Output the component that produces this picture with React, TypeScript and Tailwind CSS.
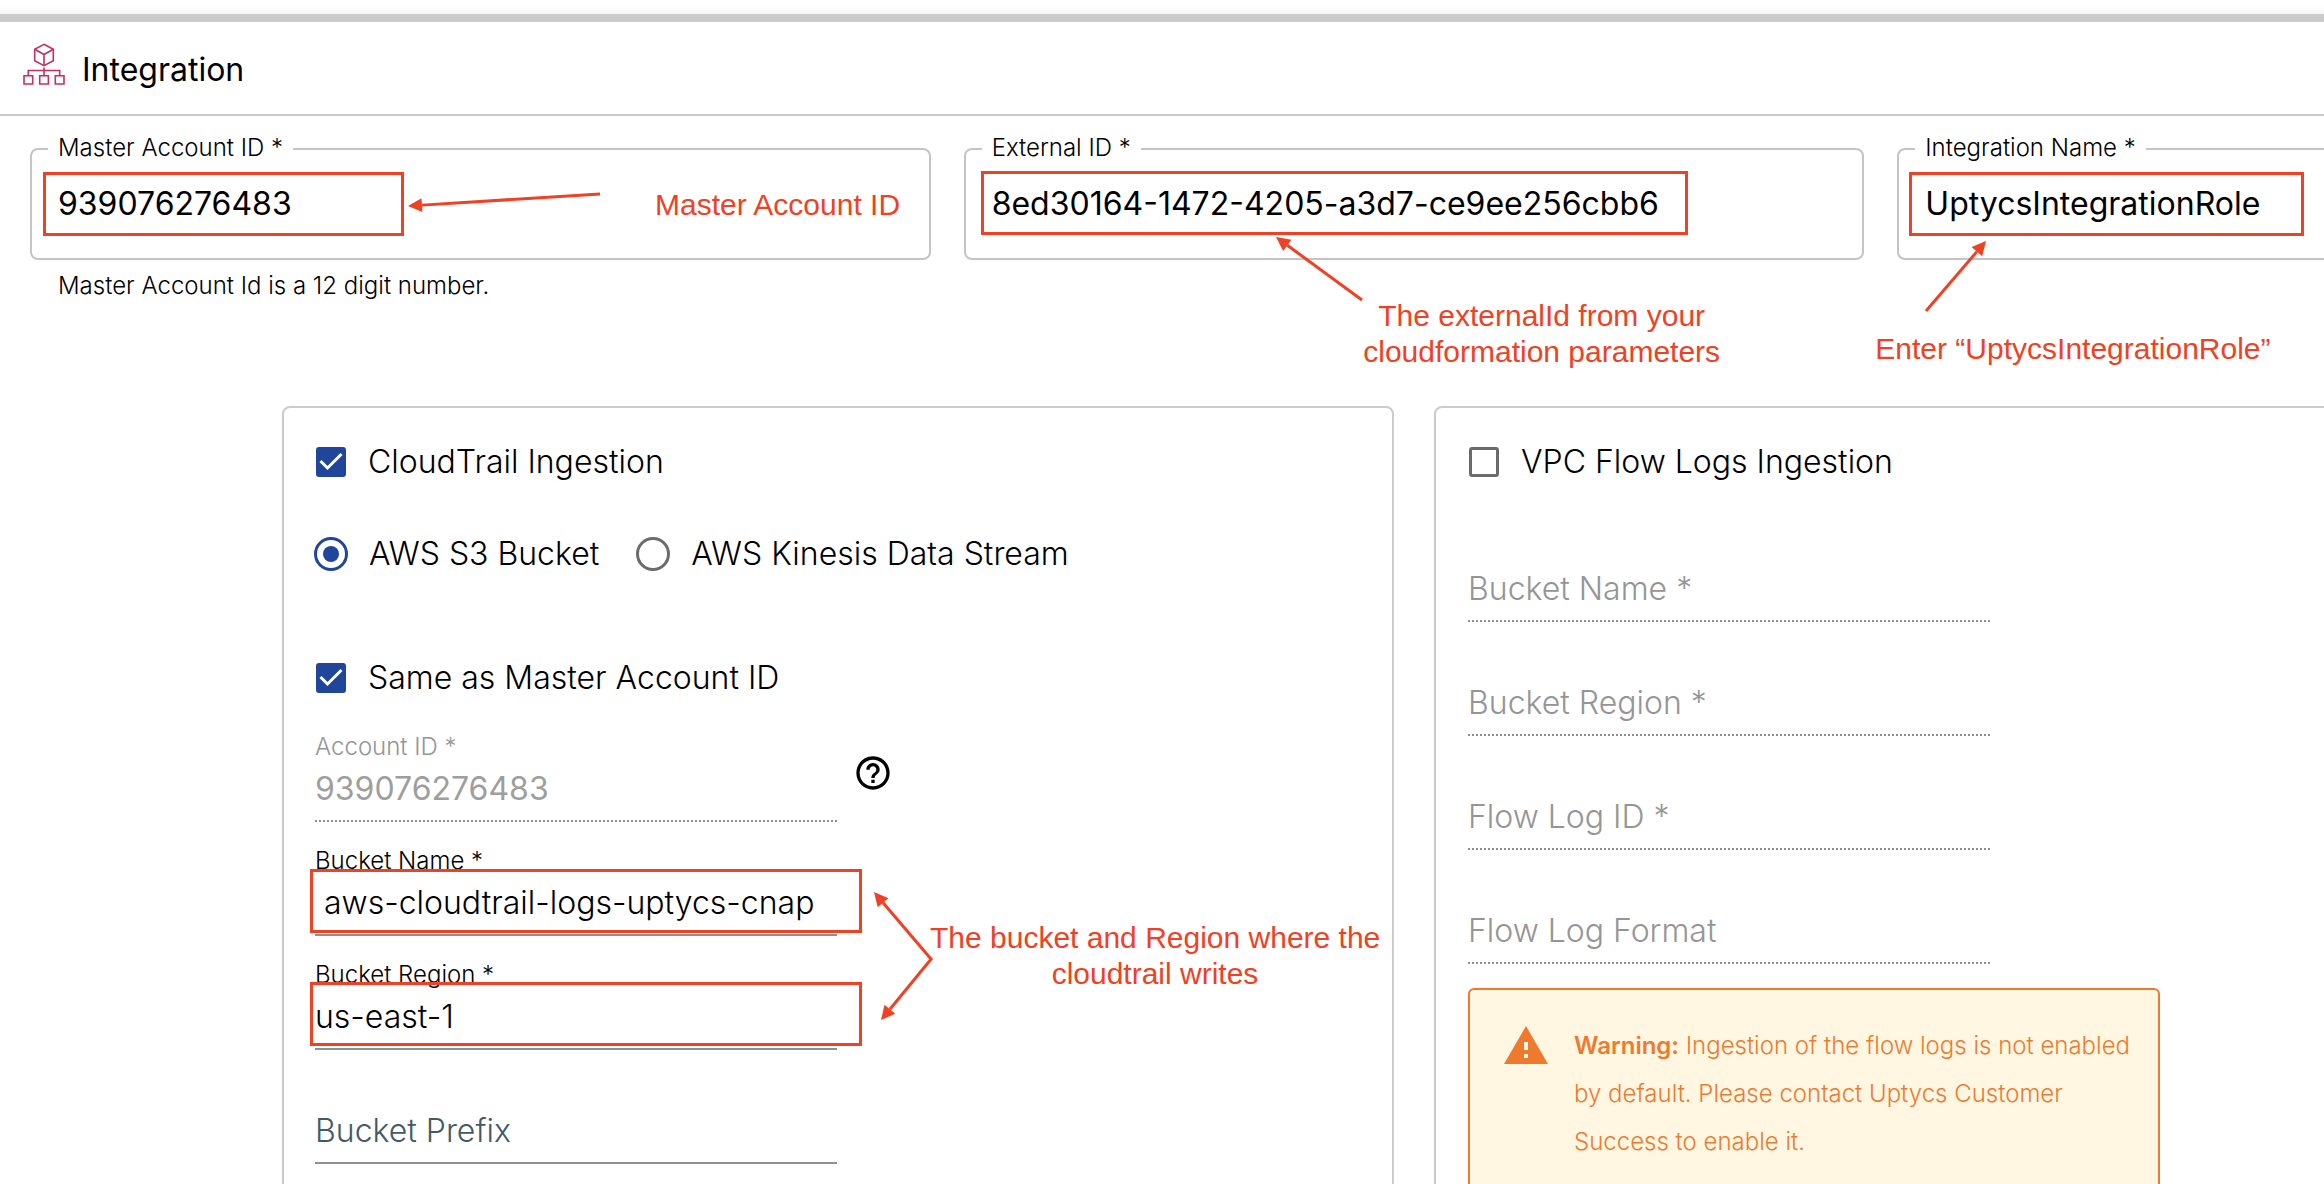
import { useState, type ReactNode } from "react";

type Point = [number, number];

function IntegrationIcon() {
  return (
    <svg viewBox="23 43 42 42" className="mb-2 h-[42px] w-[42px]" fill="none" stroke="#c2315f" strokeWidth="1.6">
      <path d="M44 44.3 53.3 49.3V60.7L44 65.7 34.7 60.7V49.3Z" />
      <path d="M34.7 49.3 44 54.5 53.3 49.3M44 54.5V65.7" />
      <path d="M44 67.5V75.7M28.3 75.7V70.5H59.7V75.7" />
      <path d="M24 75.7h8.7v8.3H24ZM39.7 75.7h8.7v8.3h-8.7ZM55.3 75.7H64v8.3h-8.7Z" />
    </svg>
  );
}

function HelpIcon() {
  return (
    <svg viewBox="0 0 24 24" className="h-10 w-10" fill="currentColor">
      <path d="M11 18h2v-2h-2v2zm1-16C6.480 2 2 6.480 2 12s4.480 10 10 10 10-4.480 10-10S17.520 2 12 2zm0 18c-4.410 0-8-3.590-8-8s3.590-8 8-8 8 3.590 8 8-3.590 8-8 8zm0-14c-2.210 0-4 1.790-4 4h2c0-1.100.9-2 2-2s2 .9 2 2c0 2-3 1.750-3 5h2c0-2.250 3-2.500 3-5 0-2.210-1.790-4-4-4z" />
    </svg>
  );
}

function WarningIcon() {
  return (
    <svg viewBox="0 0 24 24" className="h-12 w-12 shrink-0" fill="currentColor">
      <path d="M1 21h22L12 2 1 21zm12-3h-2v-2h2v2zm0-4h-2v-4h2v4z" />
    </svg>
  );
}

function Highlight({ className }: { className: string }) {
  return <div className={`pointer-events-none absolute h-16 border-3 border-[#ef4123] ${className}`} />;
}

function Arrow({ from, to }: { from: Point; to: Point }) {
  const length = Math.hypot(to[0] - from[0], to[1] - from[1]);
  const ux = (to[0] - from[0]) / length;
  const uy = (to[1] - from[1]) / length;
  const bx = to[0] - ux * 14;
  const by = to[1] - uy * 14;
  return (
    <svg className="pointer-events-none absolute top-0 left-0 h-px w-px overflow-visible" fill="#ef4123" stroke="none">
      <line x1={from[0]} y1={from[1]} x2={bx} y2={by} stroke="#ef4123" strokeWidth="3" />
      <polygon points={`${to[0]},${to[1]} ${bx - uy * 7},${by + ux * 7} ${bx + uy * 7},${by - ux * 7}`} />
    </svg>
  );
}

function Note({ className, children }: { className: string; children: ReactNode }) {
  return (
    <p
      className={`pointer-events-none absolute text-center font-['Liberation_Sans',Arial,sans-serif] text-[30px] leading-9 font-normal whitespace-nowrap text-[#ef4123] ${className}`}
    >
      {children}
    </p>
  );
}

function OutlinedField({
  id,
  label,
  value,
  helper,
  children,
}: {
  id: string;
  label: string;
  value: string;
  helper?: string;
  children?: ReactNode;
}) {
  return (
    <div className="relative">
      <fieldset className="min-w-0 rounded-lg border-2 border-[#c4c4c4]">
        <legend className="ml-4 px-2.5 pb-0.5 text-2xl leading-[22px]">
          <label htmlFor={id}>{label}</label>
        </legend>
        <input
          id={id}
          defaultValue={value}
          className="mb-[13px] block h-[84px] w-full bg-transparent px-[26px] text-[32px] font-normal outline-none"
        />
      </fieldset>
      {helper && <p className="mt-2.5 pl-7 text-2xl leading-8">{helper}</p>}
      {children}
    </div>
  );
}

function LineField({
  id,
  label,
  value,
  disabled = false,
  children,
}: {
  id: string;
  label: string;
  value?: string;
  disabled?: boolean;
  children?: ReactNode;
}) {
  const [text, setText] = useState(value ?? "");
  const resting = text === "";
  const labelColor = disabled ? "text-[#959595]" : resting ? "text-[#455a64]" : "text-black";
  return (
    <div className="relative w-[522px] pt-6">
      <div className="h-[30px]">
        <label
          htmlFor={id}
          className={`${labelColor} ${resting ? "absolute top-[61px] left-0 text-[32px] leading-10" : "text-2xl leading-[30px]"}`}
        >
          {label}
        </label>
      </div>
      <input
        id={id}
        value={text}
        onChange={(e) => setText(e.target.value)}
        disabled={disabled}
        className={`block h-[60px] w-full border-b-2 border-[#8f8f8f] bg-transparent pb-1.5 text-[32px] outline-none ${disabled ? "border-dotted font-normal text-[#9e9e9e]" : "border-solid"}`}
      />
      {children}
    </div>
  );
}

function CheckRow({ label, checked = false }: { label: string; checked?: boolean }) {
  const [on, setOn] = useState(checked);
  return (
    <label className="flex h-12 w-fit items-center gap-[21px] text-[32px]">
      <span className="relative flex w-8 justify-center">
        <input
          type="checkbox"
          checked={on}
          onChange={() => setOn(!on)}
          className="h-[30px] w-[30px] appearance-none rounded-[3px] border-3 border-[#6b6b6b] checked:border-[#20469b] checked:bg-[#20469b]"
        />
        {on && (
          <svg viewBox="0 0 30 30" className="pointer-events-none absolute top-0 left-px h-[30px] w-[30px]" fill="none" stroke="#fff" strokeWidth="3">
            <path d="M4.500 14 11.500 21 25.500 7" />
          </svg>
        )}
      </span>
      {label}
    </label>
  );
}

function RadioOption({ label, checked = false }: { label: string; checked?: boolean }) {
  return (
    <label className="flex h-12 items-center gap-[21px] text-[32px]">
      <span className="relative -ml-px flex h-[34px] w-[34px] items-center justify-center">
        <input
          type="radio"
          name="source"
          defaultChecked={checked}
          className="peer h-[34px] w-[34px] appearance-none rounded-full border-3 border-[#6b6b6b] checked:border-[#20469b]"
        />
        <span className="pointer-events-none absolute hidden h-4 w-4 rounded-full bg-[#20469b] peer-checked:block" />
      </span>
      {label}
    </label>
  );
}

export default function App() {
  return (
    <div className="h-screen overflow-hidden bg-white font-['Inter',sans-serif] font-light text-black">
      {/* The form is wider than the viewport and bleeds off its right edge. */}
      <div className="-mr-[504px]">
        <div className="h-3.5 bg-linear-to-b from-white from-40% to-[#f6f6f6]" />
        <div className="h-2 bg-[#cbcbcb]" />
        <header className="flex h-[94px] items-center gap-[17px] border-b-2 border-[#cbcbcb] pl-[23px]">
          <IntegrationIcon />
          <h1 className="pt-1 text-[32px] font-normal">Integration</h1>
        </header>

        <main>
          <section className="grid grid-cols-3 gap-[33px] px-[30px] pt-[21px]">
            <OutlinedField
              id="master"
              label="Master Account ID *"
              value="939076276483"
              helper="Master Account Id is a 12 digit number."
            >
              <Highlight className="top-[35px] left-[13px] w-[361px]" />
              <Arrow from={[570, 57]} to={[378, 69]} />
              <Note className="top-[50px] left-[625px]">Master Account ID</Note>
            </OutlinedField>
            <OutlinedField id="external" label="External ID *" value="8ed30164-1472-4205-a3d7-ce9ee256cbb6">
              <Highlight className="top-[34px] left-[17px] w-[707px]" />
              <Arrow from={[398, 163]} to={[312, 100]} />
              <Note className="top-[161px] left-[398px] w-[360px]">
                The externalId from your
                <br />
                cloudformation parameters
              </Note>
            </OutlinedField>
            <OutlinedField id="name" label="Integration Name *" value="UptycsIntegrationRole">
              <Highlight className="top-[35px] left-[12px] w-[395px]" />
              <Arrow from={[29, 174]} to={[89, 104]} />
              <Note className="top-[194px] -left-[22px]">Enter “UptycsIntegrationRole”</Note>
            </OutlinedField>
          </section>

          <section className="mt-[104px] grid grid-cols-2 gap-10 px-[282px]">
            <div className="rounded-lg border-2 border-[#cbcbcb] px-[31px] pt-[30px] pb-24">
              <CheckRow label="CloudTrail Ingestion" checked />
              <div role="radiogroup" aria-label="CloudTrail source" className="mt-11 flex gap-[38px]">
                <RadioOption label="AWS S3 Bucket" checked />
                <RadioOption label="AWS Kinesis Data Stream" />
              </div>
              <div className="mt-[76px]">
                <CheckRow label="Same as Master Account ID" checked />
              </div>
              <div className="mt-1.5 flex items-center gap-4">
                <LineField id="account" label="Account ID *" value="939076276483" disabled />
                <button type="button" aria-label="Help" className="mt-4">
                  <HelpIcon />
                </button>
              </div>
              <LineField id="bucket" label="Bucket Name *" value=" aws-cloudtrail-logs-uptycs-cnap">
                <Highlight className="top-[47px] -left-[5px] w-[552px]" />
                <Arrow from={[616, 137]} to={[559, 70]} />
                <Note className="top-[98px] left-[615px] w-[450px]">
                  The bucket and Region where the
                  <br />
                  cloudtrail writes
                </Note>
              </LineField>
              <LineField id="region" label="Bucket Region *" value="us-east-1">
                <Highlight className="top-[46px] -left-[5px] w-[552px]" />
                <Arrow from={[617, 22]} to={[566, 84]} />
              </LineField>
              <LineField id="prefix" label="Bucket Prefix" />
            </div>

            <div className="rounded-lg border-2 border-[#cbcbcb] px-[32px] pt-[30px] pb-24">
              <CheckRow label="VPC Flow Logs Ingestion" />
              <div className="mt-[22px]">
                <LineField id="flow-bucket" label="Bucket Name *" disabled />
                <LineField id="flow-region" label="Bucket Region *" disabled />
                <LineField id="flow-id" label="Flow Log ID *" disabled />
                <LineField id="flow-format" label="Flow Log Format" disabled />
              </div>
              <div
                role="alert"
                className="mt-6 flex w-[692px] gap-6 rounded-md border-2 border-[#ee7a30] bg-[#fff7e2] py-8 pr-4 pl-8 text-2xl leading-12 text-[#ee7a30]"
              >
                <WarningIcon />
                <p>
                  <strong className="font-semibold">Warning:</strong> Ingestion of the flow logs is not enabled by default. Please
                  contact Uptycs Customer Success to enable it.
                </p>
              </div>
            </div>
          </section>
        </main>
      </div>
    </div>
  );
}
